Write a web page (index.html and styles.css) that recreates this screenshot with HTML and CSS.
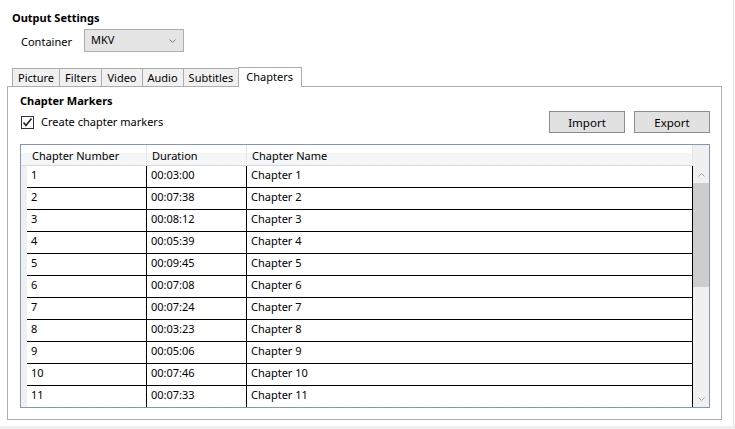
FILE: index.html
```html
<!DOCTYPE html>
<html lang="en">
<head>
  <meta charset="UTF-8" />
  <title>Output Settings</title>
  <link rel="stylesheet" href="styles.css">
</head>
<body>

  <div class="window">
    <div class="content">
      <div class="section-title">Output Settings</div>

      <div class="container-row">
        <span class="field-label">Container</span>
        <div class="combo">
          <span>MKV</span>
          <svg class="combo-arrow" width="7" height="4" viewBox="0 0 7 4"><polyline points="0.5,0.5 3.5,3.5 6.5,0.5" fill="none" stroke="#707070" stroke-width="1"/></svg>
        </div>
      </div>

      <div class="tabs">
        <div class="tab">Picture</div>
        <div class="tab">Filters</div>
        <div class="tab">Video</div>
        <div class="tab">Audio</div>
        <div class="tab">Subtitles</div>
        <div class="tab selected">Chapters</div>
      </div>

      <div class="panel">
        <div class="panel-head">
          <div class="panel-left">
            <div class="group-title">Chapter Markers</div>
            <label class="check-row">
              <span class="checkbox">
                <svg width="11" height="11" viewBox="0 0 11 11"><polyline points="1.5,5.5 4,8.5 9.5,1.5" fill="none" stroke="#222" stroke-width="1.6"/></svg>
              </span>
              Create chapter markers
            </label>
          </div>
          <div class="buttons">
            <button class="btn">Import</button>
            <button class="btn">Export</button>
          </div>
        </div>

        <div class="grid">
          <div class="grid-body">
            <div class="row head">
              <div class="rh"></div>
              <div class="hcell num">Chapter Number</div>
              <div class="hcell dur">Duration</div>
              <div class="hcell name">Chapter Name</div>
            </div>
            <div class="row"><div class="rh"></div><div class="cell num">1</div><div class="cell dur">00:03:00</div><div class="cell name">Chapter 1</div></div>
            <div class="row"><div class="rh"></div><div class="cell num">2</div><div class="cell dur">00:07:38</div><div class="cell name">Chapter 2</div></div>
            <div class="row"><div class="rh"></div><div class="cell num">3</div><div class="cell dur">00:08:12</div><div class="cell name">Chapter 3</div></div>
            <div class="row"><div class="rh"></div><div class="cell num">4</div><div class="cell dur">00:05:39</div><div class="cell name">Chapter 4</div></div>
            <div class="row"><div class="rh"></div><div class="cell num">5</div><div class="cell dur">00:09:45</div><div class="cell name">Chapter 5</div></div>
            <div class="row"><div class="rh"></div><div class="cell num">6</div><div class="cell dur">00:07:08</div><div class="cell name">Chapter 6</div></div>
            <div class="row"><div class="rh"></div><div class="cell num">7</div><div class="cell dur">00:07:24</div><div class="cell name">Chapter 7</div></div>
            <div class="row"><div class="rh"></div><div class="cell num">8</div><div class="cell dur">00:03:23</div><div class="cell name">Chapter 8</div></div>
            <div class="row"><div class="rh"></div><div class="cell num">9</div><div class="cell dur">00:05:06</div><div class="cell name">Chapter 9</div></div>
            <div class="row"><div class="rh"></div><div class="cell num">10</div><div class="cell dur">00:07:46</div><div class="cell name">Chapter 10</div></div>
            <div class="row"><div class="rh"></div><div class="cell num">11</div><div class="cell dur">00:07:33</div><div class="cell name">Chapter 11</div></div>
          </div>
          <div class="vscroll">
            <div class="sb-head"></div>
            <div class="sb-btn">
              <svg width="7" height="4" viewBox="0 0 7 4"><polyline points="0.5,3.5 3.5,0.5 6.5,3.5" fill="none" stroke="#a6a6a6" stroke-width="1"/></svg>
            </div>
            <div class="sb-thumb"></div>
            <div class="sb-track"></div>
            <div class="sb-btn">
              <svg width="7" height="4" viewBox="0 0 7 4"><polyline points="0.5,0.5 3.5,3.5 6.5,0.5" fill="none" stroke="#a6a6a6" stroke-width="1"/></svg>
            </div>
          </div>
        </div>
      </div>
    </div>
    <div class="statusbar"></div>
  </div>

</body>
</html>
```

FILE: styles.css
```css
body {
  margin: 0;
  font-family: 'Noto Sans', 'Liberation Sans', sans-serif;
  font-size: 11px;
  color: #000;
  background: #fff;
}

.window {
  width: 735px;
  height: 429px;
  overflow: hidden;
}

.content {
  width: 734px;
  height: 426px;
  box-sizing: border-box;
  padding-top: 10px;
  border-right: 1px solid #d9e1ea;
}

.statusbar {
  height: 3px;
  background: #f0f0f0;
}

.section-title {
  margin-left: 12px;
  font-weight: bold;
  line-height: 16px;
  height: 16px;
}

.container-row {
  display: flex;
  align-items: center;
  margin-top: 3px;
  padding-left: 21px;
}

.field-label {
  width: 63px;
  padding-top: 1px;
}

.combo {
  width: 100px;
  height: 23px;
  box-sizing: border-box;
  border: 1px solid #adadad;
  background: #e5e5e5;
  display: flex;
  align-items: center;
  justify-content: space-between;
  padding: 0 7px 2px 6px;
}

.combo-arrow {
  margin-top: 2px;
}

/* tab strip */
.tabs {
  display: flex;
  align-items: flex-end;
  height: 20px;
  margin-top: 15px;
  margin-bottom: -1px;
  padding-left: 12px;
}

.tab {
  height: 18px;
  margin-bottom: 1px;
  margin-left: -1px;
  box-sizing: border-box;
  border: 1px solid #acacac;
  border-bottom: none;
  background: #f0f0f0;
  padding: 0 5px;
  line-height: 17px;
}

.tab:first-child {
  margin-left: 0;
}

.tab.selected {
  position: relative;
  z-index: 1;
  height: 20px;
  margin-bottom: 0;
  background: #fff;
  padding: 0 8px 0 7px;
  line-height: 18px;
}

.panel {
  margin-left: 7px;
  width: 715px;
  height: 334px;
  box-sizing: border-box;
  border: 1px solid #adadad;
  padding: 6px 11px 0 12px;
}

.panel-head {
  display: flex;
  justify-content: space-between;
  align-items: flex-end;
}

.group-title {
  font-weight: bold;
  line-height: 16px;
}

.check-row {
  display: flex;
  align-items: center;
  gap: 7px;
  margin-top: 5px;
  line-height: 16px;
  padding-left: 1px;
}

.checkbox {
  width: 13px;
  height: 13px;
  box-sizing: border-box;
  border: 1px solid #333;
  background: #fff;
  display: flex;
  align-items: center;
  justify-content: center;
}

.buttons {
  display: flex;
  gap: 9px;
  margin-bottom: -3px;
}

.btn {
  width: 76px;
  height: 22px;
  border: 1px solid #8c8c8c;
  background: #e1e1e1;
  font-family: inherit;
  font-size: 11.5px;
  padding: 0;
  color: #000;
}

/* data grid */
.grid {
  display: flex;
  width: 690px;
  height: 264px;
  box-sizing: border-box;
  margin-top: 14px;
  border: 1px solid #8298b6;
  overflow: hidden;
}

.grid-body {
  width: 672px;
  overflow: hidden;
}

.row {
  display: flex;
  height: 22px;
}

.rh {
  width: 6px;
  background: #f0f0f0;
}

.num { width: 120px; }
.dur { width: 100px; }
.name { width: 446px; }

.row.head {
  height: 21px;
  box-sizing: border-box;
  border-bottom: 1px solid #dadada;
  background: linear-gradient(#fff 0, #fff 40%, #f4f6f8 40%);
}

.row.head .rh {
  background: transparent;
}

.hcell {
  box-sizing: border-box;
  border-right: 1px solid #e5e5e5;
  padding-left: 5px;
  line-height: 21px;
}

.cell {
  box-sizing: border-box;
  border-right: 1px solid #000;
  border-bottom: 1px solid #000;
  padding-left: 4px;
  line-height: 17px;
}

.vscroll {
  width: 16px;
  background: #f0f0f0;
  display: flex;
  flex-direction: column;
}

.sb-head {
  height: 21px;
}

.sb-btn {
  height: 17px;
  display: flex;
  align-items: center;
  justify-content: center;
}

.sb-thumb {
  height: 104px;
  background: #cdcdcd;
}

.sb-track {
  flex: 1;
}
```
